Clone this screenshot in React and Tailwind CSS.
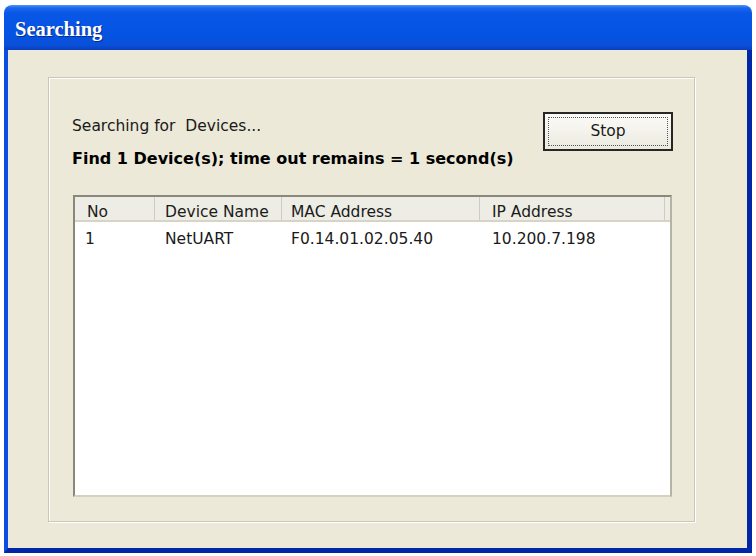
import React from 'react';

const columns = [
  { label: 'No', width: 'w-[80px]', pad: 'pl-[12px]' },
  { label: 'Device Name', width: 'w-[127px]', pad: 'pl-[10px]' },
  { label: 'MAC Address', width: 'w-[198px]', pad: 'pl-[9px]' },
  { label: 'IP Address', width: 'w-[185px]', pad: 'pl-[12px]' },
];

const devices = [
  { no: '1', name: 'NetUART', mac: 'F0.14.01.02.05.40', ip: '10.200.7.198' },
];

const SearchDialog = () => {
  return (
    <div className="w-[756px] h-[556px] bg-white pt-[5px] pl-[4px] font-['DejaVu_Sans',sans-serif] text-[15.5px] text-[#1a1a1a]">
      <div className="w-[748px] h-[548px] flex flex-col rounded-t-[8px] overflow-hidden">
        {/* title bar */}
        <div className="h-[45px] shrink-0 flex items-center pl-[11px] bg-[linear-gradient(to_bottom,#4a95f7_0px,#1a66ee_3px,#0857e6_8px,#0453e2_30px,#0a50d8_40px,#0a3fc2_45px)]">
          <span className="font-['Liberation_Serif',serif] font-bold text-[20.5px] text-white [text-shadow:1px_1px_0_#0b2a8c] mt-[3px]">
            Searching
          </span>
        </div>

        {/* body */}
        <div className="flex-1 flex flex-col bg-[#ECE9D8] border-l-[4px] border-r-[5px] border-b-[5px] border-l-[#0b4fe2] border-r-[#0226a8] border-b-[#0226a8] pl-[40px] pt-[27px] pr-[52px] pb-[26px]">
          {/* group box */}
          <div className="flex-1 flex flex-col border border-[#C9C7B6] shadow-[1px_1px_0_#ffffff,inset_1px_1px_0_#ffffff] pt-[34px] pl-[24px] pr-[22px] pb-[24px]">
            <div className="flex justify-between items-start">
              <div className="mt-[4px] -ml-[1px]">
                <div className="h-[20px] leading-[20px] whitespace-pre">Searching for  Devices...</div>
                <div className="h-[20px] leading-[20px] mt-[13px] font-bold text-[16px] text-black">
                  Find 1 Device(s); time out remains = 1 second(s)
                </div>
              </div>
              <button className="w-[130px] h-[39px] -mr-[1px] border-2 border-[#262626] bg-[linear-gradient(to_bottom,#fbfbf8,#eceadf)] p-[3px]">
                <div className="h-full w-full border border-dotted border-[#555] flex items-center justify-center leading-none">
                  Stop
                </div>
              </button>
            </div>

            {/* list view */}
            <div className="flex-1 mt-[26px] bg-white border-2 border-t-[#8a887c] border-l-[#8a887c] border-b-[#d4d1c2] border-r-[#b5b3a6] flex flex-col">
              <div className="h-[25px] flex bg-[#EEEDE5] border-b-[2px] border-b-[#d7d4c6]">
                {columns.map((col) => (
                  <div
                    key={col.label}
                    className={`${col.width} ${col.pad} shrink-0 flex items-center pt-[8px] border-r border-r-[#cfccbd]`}
                  >
                    <span className="leading-none">{col.label}</span>
                  </div>
                ))}
                <div className="flex-1" />
              </div>
              {devices.map((d) => (
                <div key={d.no} className="flex h-[20px] leading-[20px] mt-[7px]">
                  <div className="w-[80px] pl-[10px] shrink-0">{d.no}</div>
                  <div className="w-[127px] pl-[10px] shrink-0">{d.name}</div>
                  <div className="w-[198px] pl-[9px] shrink-0">{d.mac}</div>
                  <div className="w-[185px] pl-[12px] shrink-0">{d.ip}</div>
                </div>
              ))}
            </div>
          </div>
        </div>
      </div>
    </div>
  );
};

export default function App() {
  return <SearchDialog />;
}
